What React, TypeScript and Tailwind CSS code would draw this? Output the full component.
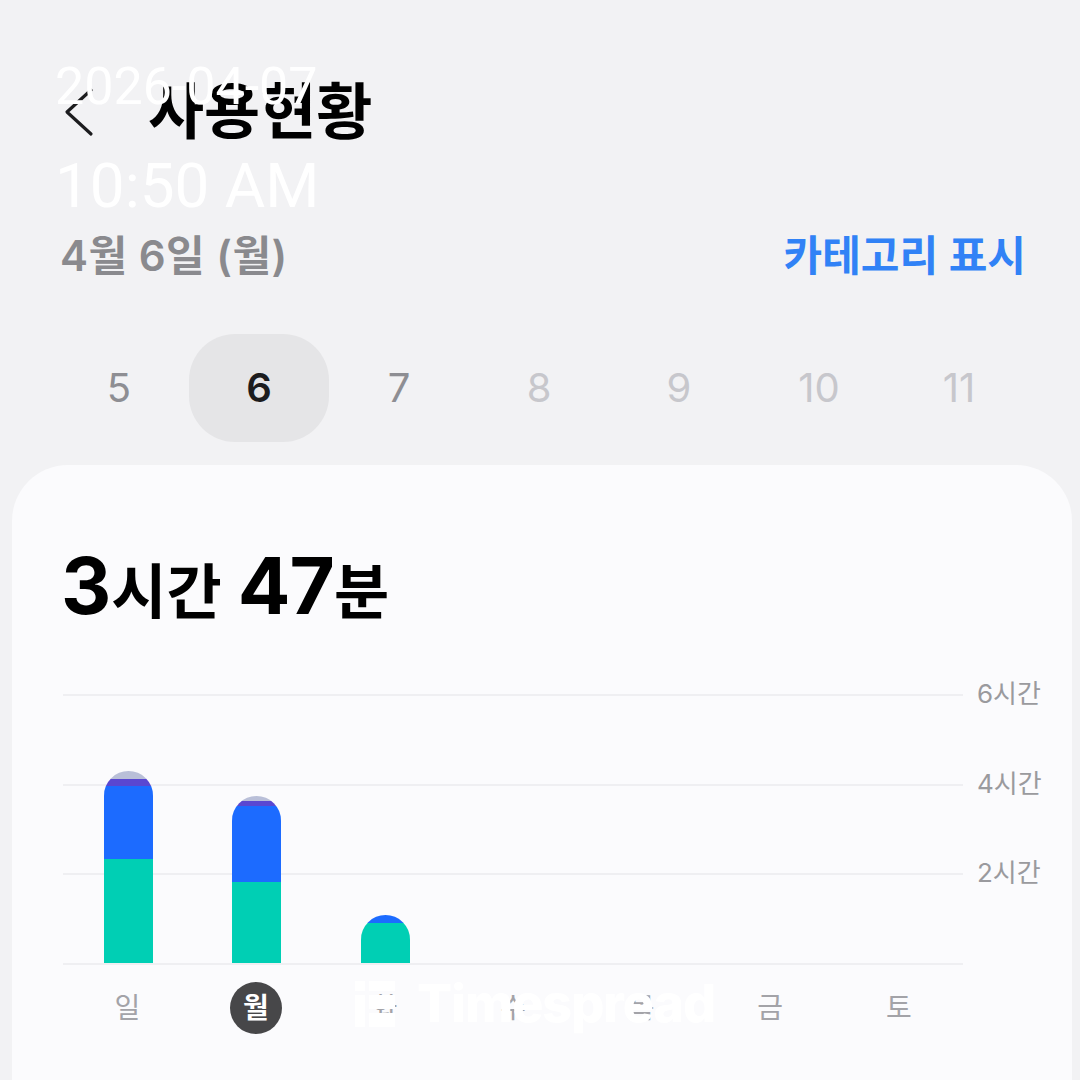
const FONT = "font-['Inter','Noto_Sans_CJK_KR',sans-serif]"

const days = [
  { n: '5', cls: 'text-[#8e8e93]' },
  { n: '6', cls: 'text-[#1c1c1e] font-semibold', active: true },
  { n: '7', cls: 'text-[#8e8e93]' },
  { n: '8', cls: 'text-[#c7c7cc]' },
  { n: '9', cls: 'text-[#c7c7cc]' },
  { n: '10', cls: 'text-[#c7c7cc]' },
  { n: '11', cls: 'text-[#c7c7cc]' },
]

// heights in px, bottom to top: green, blue, purple, gray
const bars = [
  [104, 73, 7, 8],
  [81, 76, 5, 5],
  [40, 8, 0, 0],
  [0, 0, 0, 0],
  [0, 0, 0, 0],
  [0, 0, 0, 0],
  [0, 0, 0, 0],
]
const segColors = ['#00cfb4', '#1c6bff', '#5a47d1', '#b9bfd8']

const weekdays = ['일', '월', '화', '수', '목', '금', '토']

function Bar({ segs }: { segs: number[] }) {
  const total = segs.reduce((a, b) => a + b, 0)
  if (!total) return null
  return (
    <div className="w-[49px] rounded-t-full overflow-hidden flex flex-col-reverse">
      {segs.map((h, i) =>
        h ? <div key={i} style={{ height: h, backgroundColor: segColors[i] }} /> : null
      )}
    </div>
  )
}

export default function App() {
  return (
    <div className={`relative h-[1080px] w-[1080px] overflow-hidden bg-[#f2f2f4] flex flex-col ${FONT}`}>
      {/* header */}
      <div className="mt-[62px] h-[100px] flex items-center pl-[64px]">
        <svg width="32" height="50" viewBox="0 0 32 50" fill="none">
          <path d="M27 3 L3 25 L27 47" stroke="#1c1c1e" strokeWidth="3.2" strokeLinecap="round" strokeLinejoin="round" />
        </svg>
        <h1 className="ml-[52px] text-[61px] leading-none font-bold text-black">사용현황</h1>
      </div>

      {/* date row */}
      <div className="mt-[68px] h-[50px] flex items-center justify-between pl-[60px] pr-[54px]">
        <span className="text-[42px] font-semibold text-[#8a8a8e] tracking-[0.5px]">4월 6일 (월)</span>
        <span className="text-[42px] font-semibold text-[#3182f6]">카테고리 표시</span>
      </div>

      {/* day selector */}
      <div className="mt-[54px] h-[108px] flex pl-[49px]">
        {days.map((d) => (
          <div
            key={d.n}
            className={`w-[140px] h-[108px] flex items-center justify-center rounded-[46px] text-[40px] ${d.cls} ${d.active ? 'bg-[#e5e5e7]' : ''}`}
          >
            {d.n}
          </div>
        ))}
      </div>

      {/* card */}
      <div className="mt-[23px] ml-[12px] mr-[8px] flex-1 rounded-t-[56px] bg-[#fbfbfd] pl-[49px] pt-[82px]">
        <div className="flex items-baseline font-bold text-black leading-none">
          <span className="text-[78px]">3</span>
          <span className="text-[60px]">시간</span>
          <span className="ml-[16px] text-[78px] tracking-[-1px]">47</span>
          <span className="text-[60px]">분</span>
        </div>

        {/* chart */}
        <div className="mt-[69px] ml-[2px] grid">
          <div className="col-start-1 row-start-1 flex flex-col">
            {['6시간', '4시간', '2시간'].map((l) => (
              <div key={l} className="h-[89.5px] flex items-start">
                <div className="w-[900px] h-[2px] bg-[#efeff2]" />
                <span className="pl-[14px] -translate-y-1/2 text-[26px] leading-none text-[#9a9a9e]">{l}</span>
              </div>
            ))}
            <div className="w-[900px] h-[2px] bg-[#efeff2]" />
          </div>
          <div className="col-start-1 row-start-1 w-[900px] h-[268.5px] flex items-end">
            {bars.map((b, i) => (
              <div key={i} className="flex-1 flex justify-center pl-[2px]">
                <Bar segs={b} />
              </div>
            ))}
          </div>
        </div>

        {/* weekdays */}
        <div className="mt-[17px] ml-[2px] w-[900px] flex">
          {weekdays.map((w, i) => (
            <div key={w} className="flex-1 flex justify-center">
              {i === 1 ? (
                <div className="w-[52px] h-[52px] rounded-full bg-[#474749] flex items-center justify-center text-[28px] font-semibold text-white">
                  {w}
                </div>
              ) : (
                <div className="h-[52px] flex items-center text-[28px] text-[#a3a3a8]">{w}</div>
              )}
            </div>
          ))}
        </div>
      </div>

      {/* screenshot timestamp overlay */}
      <div className="absolute left-[55px] top-[61px] font-['Roboto',sans-serif] text-white font-normal leading-none">
        <div className="text-[52px]">2026-04-07</div>
        <div className="mt-[42px] text-[62px]">10:50 AM</div>
      </div>

      {/* watermark */}
      <div className="absolute left-[355px] top-[978px] flex items-center gap-[22px] text-white">
        <svg width="40" height="46" viewBox="0 0 40 46" fill="white">
          <rect x="0" y="0" width="10" height="10" />
          <rect x="14" y="0" width="26" height="10" />
          <rect x="0" y="14" width="10" height="32" />
          <rect x="14" y="14" width="26" height="14" />
          <rect x="14" y="32" width="26" height="14" />
        </svg>
        <span className="font-['Inter',sans-serif] text-[52px] font-extrabold tracking-[-1px] leading-none">Timespread</span>
      </div>
    </div>
  )
}
